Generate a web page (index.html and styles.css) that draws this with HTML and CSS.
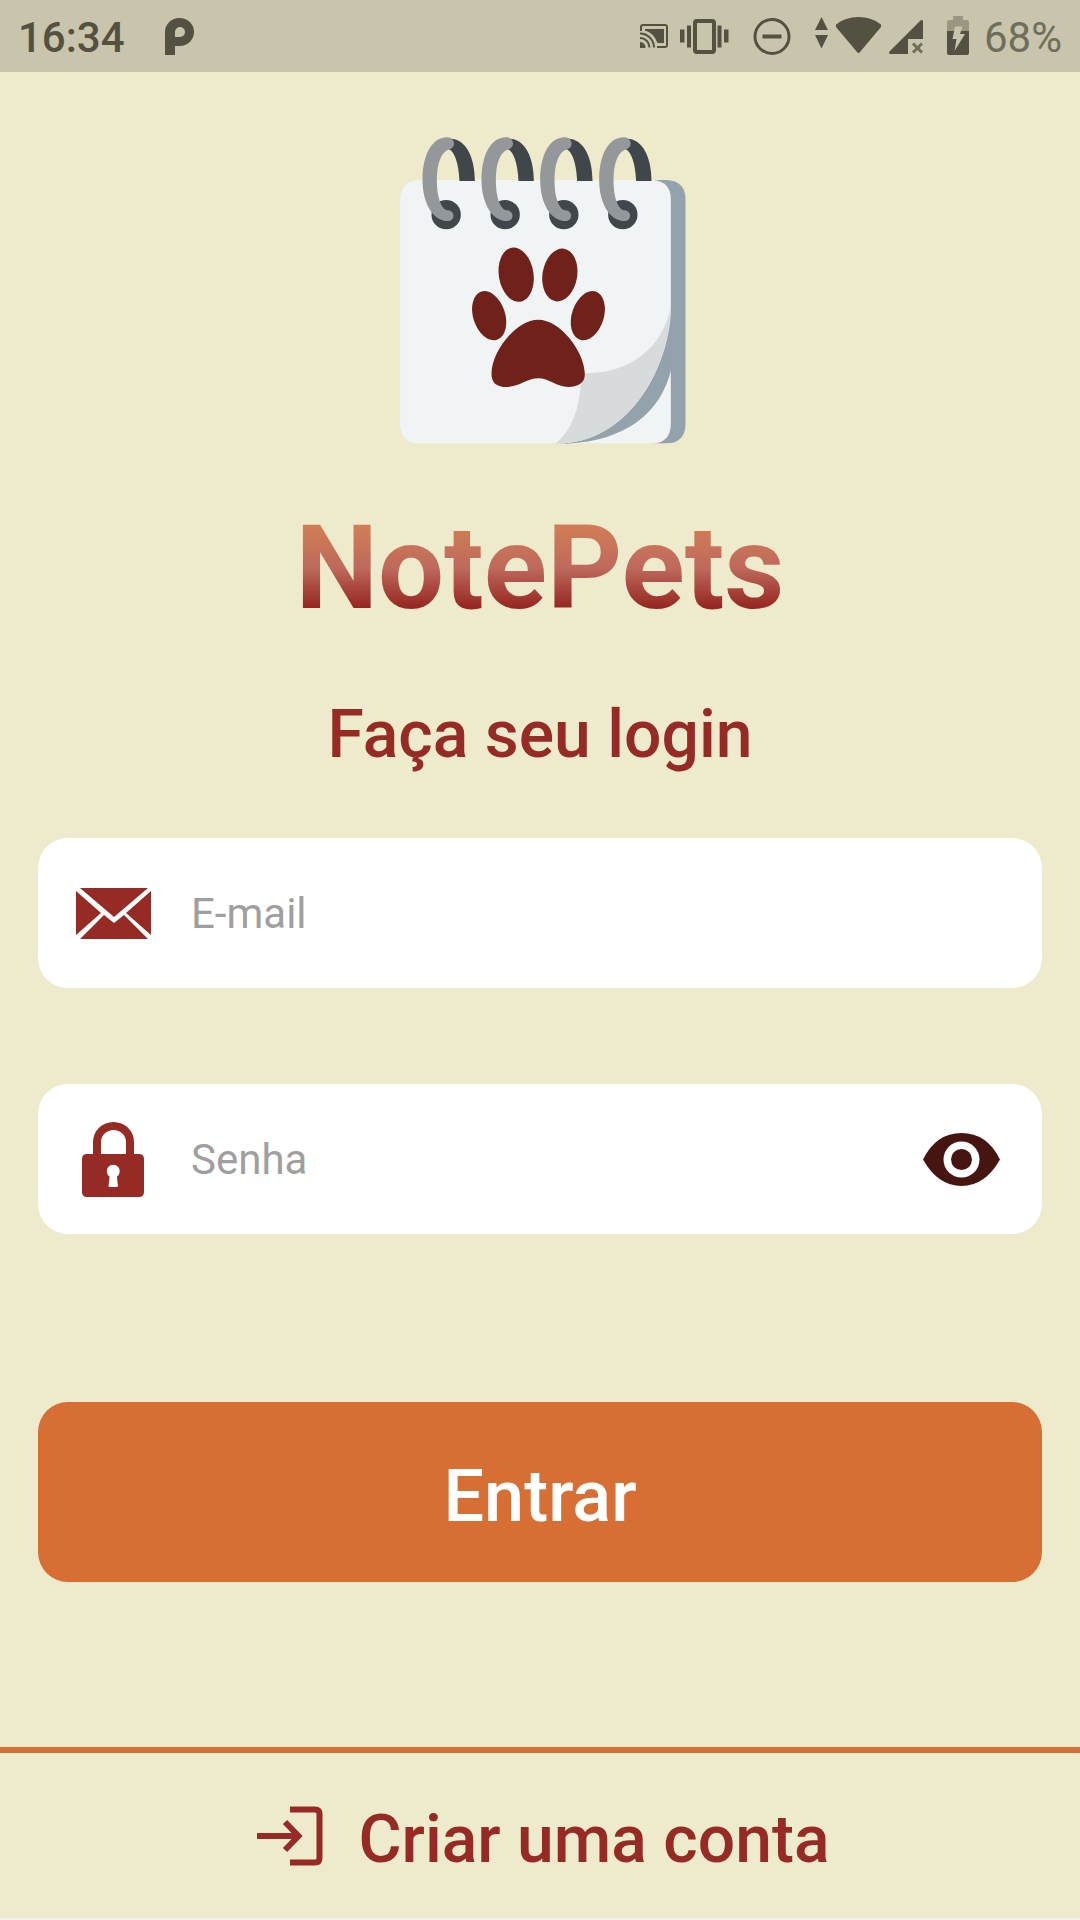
FILE: index.html
```html
<!DOCTYPE html>
<html lang="pt-BR">
<head>
<meta charset="utf-8">
<meta name="viewport" content="width=device-width, initial-scale=1">
<title>NotePets</title>
<link rel="stylesheet" href="styles.css">
</head>
<body>
<header class="status">
  <div class="status-group">
    <span class="clock">16:34</span>
    <svg class="status-icon app-icon" width="29" height="40" viewBox="0 0 29 40" aria-hidden="true"><path fill-rule="evenodd" d="M0 39V16A14.500 14 0 1 1 14.500 30H10V39ZM10 21V16A5 5 0 1 1 15 21Z"/></svg>
  </div>
  <div class="status-group status-right">
    <svg class="status-icon" width="28" height="40" viewBox="0 0 28 40" aria-hidden="true"><g fill="none" stroke="#525142" stroke-width="2"><path d="M1 15V11Q1 9 3 9H25Q27 9 27 11V29Q27 31 25 31H17"/><path d="M0 17.500A14 14 0 0 1 14 31.500M0 22A9.500 9.500 0 0 1 9.500 31.500"/></g><path d="M5 13H24V27H17.500Q14 17 5 14.500ZM0 26A5.500 5.500 0 0 1 5.500 32H0Z"/></svg>
    <svg class="status-icon" width="49" height="40" viewBox="0 0 49 40" aria-hidden="true"><path d="M0 13.500H4.500V26.500H0ZM7 9.500H11V31.500H7ZM37.500 9.500H41.500V31.500H37.500ZM44 13.500H48.500V26.500H44Z"/><rect x="15" y="5" width="19" height="31" rx="2" fill="none" stroke="#525142" stroke-width="4"/></svg>
    <svg class="status-icon wide-gap" width="38" height="40" viewBox="0 0 38 40" aria-hidden="true"><circle cx="19" cy="20.500" r="17" fill="none" stroke="#525142" stroke-width="3"/><path d="M9.500 18.500H28.500V22.500H9.500Z"/></svg>
    <svg class="status-icon wide-gap" width="13" height="40" viewBox="0 0 13 40" aria-hidden="true"><path d="M6.500 1L13 14H0ZM0 19H13L6.500 32.500Z"/></svg>
    <svg class="status-icon tight-gap" width="45" height="40" viewBox="0 0 45 40" aria-hidden="true"><path d="M0 8.500Q9 1 22.500 1T45 8.500Q46 10 45 11L24 36Q22.500 38 21 36L0 11Q-1 10 0 8.500Z"/></svg>
    <svg class="status-icon tight-gap" width="34" height="40" viewBox="0 0 34 40" aria-hidden="true"><path d="M34 5V23H19V38H1Q-1 37 1 35L31 5Q33 3 34 5Z"/><path d="M24 27.500L33 36.500M33 27.500L24 36.500" stroke="#6f6e5d" stroke-width="3"/></svg>
    <svg class="status-icon wide-gap" width="22" height="40" viewBox="0 0 22 40" aria-hidden="true"><path fill="#999781" d="M6 0H16V4H20Q22 4 22 6V15H0V6Q0 4 2 4H6Z"/><path d="M0 15H22V37Q22 39 20 39H2Q0 39 0 37Z"/><path fill="#c8c5ac" d="M8 10.500H15.500L13 18H18L7.500 35L9.500 23H5.500Z"/></svg>
    <span class="battery-level">68%</span>
  </div>
</header>

<main class="content">
  <svg class="logo" viewBox="60 52 857 924" role="img" aria-label="Logotipo NotePets">
    <path fill="#94a2ab" d="M820 181H862Q916 186 916 238V915Q914 968 862 971H820Z"/>
    <path fill="#f0f4f5" d="M114 181H820Q872 187 872 238V915Q870 968 820 971H114Q62 968 60 915V238Q62 185 114 181Z"/>
    <path fill="#94a2ab" d="M873 565C866 760 735 976 525 972H560C740 962 840 880 873 750Z"/>
    <path fill="#d7dbdc" d="M871 565C866 760 735 976 525 972C575 935 603 860 603 760C740 767 846 690 871 565Z"/>
    <g fill="#70221a">
      <ellipse cx="408" cy="465" rx="52" ry="82" transform="rotate(-9 408 465)"/>
      <ellipse cx="539" cy="466" rx="52" ry="80" transform="rotate(9 539 466)"/>
      <ellipse cx="327" cy="588" rx="48" ry="76" transform="rotate(-18 327 588)"/>
      <ellipse cx="623" cy="588" rx="48" ry="76" transform="rotate(18 623 588)"/>
      <path d="M474 600C540 600 614 696 614 764C614 792 592 802 564 802C530 802 506 776 474 776C442 776 416 802 380 802C350 802 334 790 334 762C334 696 408 600 474 600Z"/>
    </g>
    <defs>
      <g id="ring">
        <circle cx="198" cy="285" r="44" fill="#40464a"/>
        <path fill="#40464a" d="M200 58C255 50 284 110 284 184H238C236 130 222 92 204 88Z"/>
        <path fill="#94989b" d="M202 53C150 53 127 115 127 180C127 250 158 304 204 304A16 16 0 0 0 204 272C184 270 170 235 170 180C170 135 182 98 204 90A18 18 0 0 0 202 53Z"/>
      </g>
    </defs>
    <use href="#ring"/><use href="#ring" x="177"/><use href="#ring" x="353"/><use href="#ring" x="530"/>
  </svg>
  <h1 class="brand">NotePets</h1>
  <h2 class="title">Faça seu login</h2>

  <form class="form">
    <div class="field">
      <label class="field-icon" for="email" aria-label="E-mail">
        <svg width="75" height="75" viewBox="0 0 75 75" fill="#962a24" aria-hidden="true"><path d="M4 12H72L38 41ZM0 15L25 37L0 59ZM75 15V59L50 37ZM4 63L28 39L38 47L48 39L72 63Z"/></svg>
      </label>
      <input class="input" id="email" type="email" placeholder="E-mail">
    </div>
    <div class="field">
      <label class="field-icon" for="password" aria-label="Senha">
        <svg width="75" height="75" viewBox="0 0 75 75" fill="#962a24" aria-hidden="true"><path fill-rule="evenodd" d="M6 37Q6 32 11 32H17V20A20.500 20 0 0 1 58 20V32H63Q68 32 68 37V70Q68 75 63 75H11Q6 75 6 70ZM25 32H50V20A12.500 12 0 0 0 25 20ZM32.500 63.500Q33.500 58 33.500 54.500A6.500 6.500 0 1 1 41 54.500Q41 58 42 63.500Q42 65 40 65H35Q32 65 32.500 63.500Z"/></svg>
      </label>
      <input class="input" id="password" type="password" placeholder="Senha">
      <button class="reveal" type="button" aria-label="Mostrar senha">
        <svg width="77" height="53" viewBox="0 0 77 53" aria-hidden="true"><path fill="#461511" d="M0 26.500Q13 0 38.500 0T77 26.500Q62 53 38.500 53T0 26.500Z"/><circle cx="38.500" cy="26.500" r="18" fill="#fff"/><circle cx="38.500" cy="26.500" r="10.500" fill="#461511"/></svg>
      </button>
    </div>
    <button class="submit" type="submit">Entrar</button>
  </form>
</main>

<footer class="footer">
  <a class="signup" href="#">
    <svg width="66" height="60" viewBox="0 0 66 60" fill="none" stroke="#962a24" stroke-width="6" aria-hidden="true"><path d="M33 3.500H58Q62.500 3.500 62.500 8V52Q62.500 56.500 58 56.500H33M0 30H42M28 16L41.500 30L28 44"/></svg>
    <span>Criar uma conta</span>
  </a>
</footer>
</body>
</html>
```
FILE: styles.css
```css
* {
  box-sizing: border-box;
}

body {
  margin: 0;
  min-height: 100vh;
  display: flex;
  flex-direction: column;
  background: #eeeacc;
  border-bottom: 2px solid #f0f0f0;
  color: #962a24;
  font-family: Roboto, "Liberation Sans", sans-serif;
}

svg {
  display: block;
  flex: none;
}

.status {
  display: flex;
  justify-content: space-between;
  align-items: center;
  height: 72px;
  padding: 0 18px;
  background: #c8c5ac;
  color: #525142;
  font-size: 42px;
  font-weight: 500;
  line-height: 48px;
}

.status-group {
  display: flex;
  align-items: center;
}

.clock,
.battery-level {
  padding-top: 3px;
}

.status-right {
  gap: 12px;
}

.status-icon {
  fill: #525142;
}

.app-icon {
  margin-left: 40px;
}

.wide-gap {
  margin-left: 12px;
}

.tight-gap {
  margin-left: -4px;
}

.battery-level {
  margin-left: 3px;
  color: #6f6e5d;
  font-weight: 400;
}

.content {
  display: flex;
  flex-direction: column;
  align-items: center;
  padding: 65px 38px 0;
}

.logo {
  width: 286px;
  height: 308px;
  margin-left: 6px;
}

.brand {
  margin: 53px 0 57px;
  font-size: 117px;
  font-weight: 700;
  line-height: 140px;
  color: transparent;
  background: linear-gradient(#d07c56 22%, #be695c 50%, #962723 78%);
  background-clip: text;
  -webkit-background-clip: text;
}

.title {
  margin: 0 0 63px;
  font-size: 66px;
  font-weight: 500;
  line-height: 80px;
}

.form {
  display: flex;
  flex-direction: column;
  gap: 96px;
  width: 100%;
}

.field {
  display: flex;
  align-items: center;
  height: 150px;
  padding: 0 42px 0 38px;
  border-radius: 30px;
  background: #fff;
}

.input {
  flex: 1;
  min-width: 0;
  height: 100%;
  margin-left: 40px;
  padding: 0;
  border: 0;
  outline: 0;
  background: transparent;
  color: #461511;
  font: 400 42px Roboto, "Liberation Sans", sans-serif;
}

.input::placeholder {
  color: #9f9f9f;
  opacity: 1;
}

.reveal {
  padding: 0;
  border: 0;
  background: none;
}

.submit {
  height: 180px;
  margin-top: 72px;
  padding: 9px 0 0;
  border: 0;
  border-radius: 30px;
  background: #d76e33;
  color: #fff;
  font: 500 72px Roboto, "Liberation Sans", sans-serif;
}

.footer {
  margin-top: auto;
  border-top: 6px solid #d37036;
}

.signup {
  display: flex;
  justify-content: center;
  align-items: center;
  gap: 36px;
  height: 165px;
  padding-left: 6px;
  color: inherit;
  font-size: 66px;
  font-weight: 500;
  line-height: 80px;
  text-decoration: none;
}

.signup span {
  padding-top: 8px;
}
```
